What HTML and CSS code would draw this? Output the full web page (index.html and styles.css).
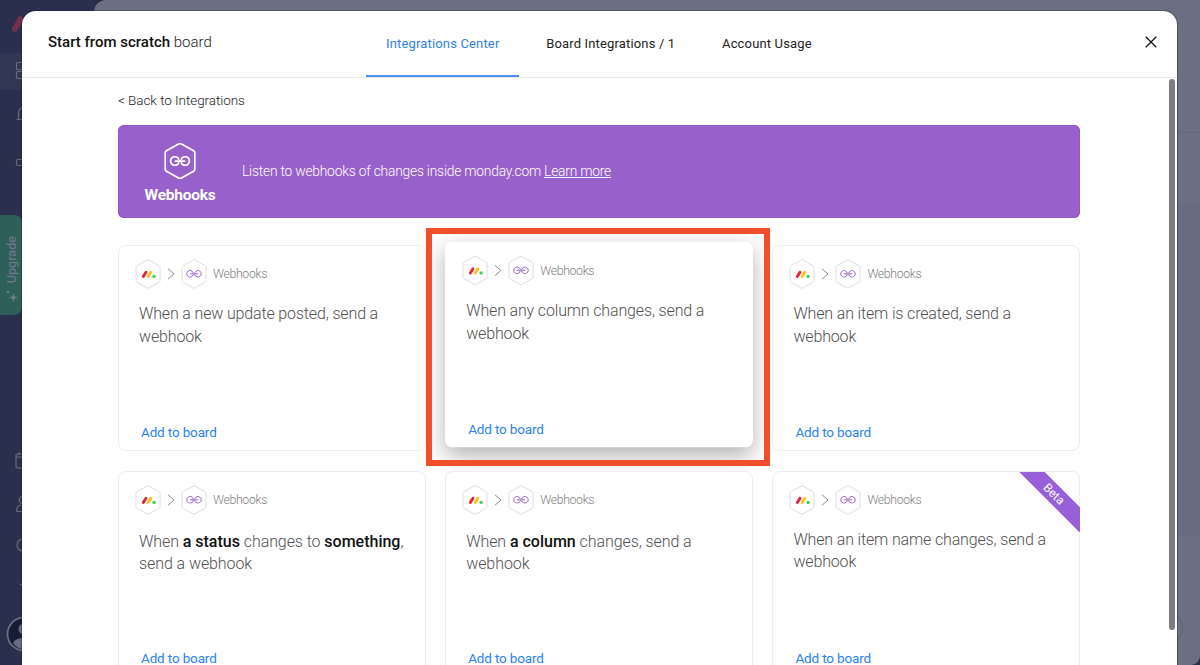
FILE: index.html
```html
<!DOCTYPE html>
<html lang="en">
<head>
<meta charset="utf-8">
<title>Integrations Center</title>
<link rel="stylesheet" href="styles.css">
</head>
<body>
<svg class="defs" aria-hidden="true">
  <symbol id="hex" viewBox="0 0 26 30"><path d="M11.8 1.2Q13 .5 14.2 1.2L24 6.7Q25 7.3 25 8.5V21.5Q25 22.7 24 23.3L14.2 28.8Q13 29.5 11.8 28.8L2 23.3Q1 22.7 1 21.5V8.5Q1 7.3 2 6.7Z"/></symbol>
  <symbol id="link" viewBox="0 0 16 8"><g fill="none" stroke="currentColor"><path d="M7.2 2.9A3.3 3.3 0 1 0 7.2 5.1M8.8 2.9A3.3 3.3 0 1 1 8.8 5.1M4 4H7.4M8.6 4H12"/><path d="M6.8 2.6L9.2 5.4M9.2 2.6L6.8 5.4" stroke-width=".7"/></g></symbol>
  <symbol id="monday" viewBox="0 0 26 30"><path d="M8.3 17.6L11 13.2" stroke="#e8213f"/><path d="M13.2 17.6L15.9 13.2" stroke="#fcc419"/><circle cx="19.1" cy="17.4" r="1.7" fill="#3bd15a"/></symbol>
  <symbol id="chev" viewBox="0 0 8 12"><path d="M1 .8L7 6L1 11.2" fill="none" stroke="#8c8c8c"/></symbol>
</svg>
<div class="app">
  <nav class="rail">
    <div class="active-row"></div>
    <svg class="rail-icons" viewBox="0 0 94 665">
      <path d="M15 29L20.5 19" stroke="#722f4c" stroke-width="6" stroke-linecap="round"/>
      <g fill="none" stroke="#666c82" stroke-width="1.2">
        <rect x="16.5" y="62.5" width="8" height="7" rx="1"/><rect x="16.5" y="71.5" width="8" height="7" rx="1"/>
        <path d="M16.5 119.5H30M18.5 119V113Q18.5 109 22 108"/>
        <rect x="16.5" y="159.5" width="9" height="6" rx="1.5"/>
        <rect x="16" y="454" width="12" height="14" rx="1.5"/><path d="M16 457H30M19 452V455"/>
        <circle cx="23" cy="500" r="3.7"/><path d="M16.5 511.5Q16.5 506 21 505M16.5 511.5H25"/>
        <circle cx="23" cy="545" r="6"/><path d="M20 585L23 583"/>
      </g>
      <circle cx="24" cy="634" r="16.5" fill="#171c36" stroke="#6c7186" stroke-width="1.7"/>
      <circle cx="24" cy="629" r="5.5" fill="#666c82"/><path d="M13 643Q15 638 24 638V649Q17 649 13 643" fill="#666c82"/>
    </svg>
    <div class="upgrade"><svg viewBox="0 0 12 12"><path d="M7.5 3L8.6 6.4L12 7.5L8.6 8.6L7.5 12L6.4 8.6L3 7.5L6.4 6.4ZM2 0L2.7 1.4L4.4 2L2.7 2.6L2 4.3L1.3 2.6L0 2L1.3 1.4Z"/></svg><span>Upgrade</span></div>
  </nav>
  <div class="workspace"><div class="band band-a"></div><div class="band band-b"></div><div class="bubble"></div></div>
</div>

<main class="modal">
  <header class="head">
    <h1 class="title"><b>Start from scratch</b> board</h1>
    <nav class="tabs">
      <a class="tab tab-on">Integrations Center</a>
      <a class="tab">Board Integrations / 1</a>
      <a class="tab">Account Usage</a>
    </nav>
    <svg class="close" viewBox="0 0 12 12"><path d="M.7 .7L11.3 11.3M11.3 .7L.7 11.3" stroke="#111" stroke-width="1.25"/></svg>
  </header>
  <section class="body">
    <a class="back">&lt; Back to Integrations</a>
    <div class="banner">
      <div class="brand">
        <svg class="brand-icon" viewBox="0 0 34 38"><use href="#hex" x="0.5" y="0.5" width="33" height="37"/><use href="#link" x="6.5" y="13.8" width="21" height="10.5"/></svg>
        <strong>Webhooks</strong>
      </div>
      <p class="pitch">Listen to webhooks of changes inside monday.com <u>Learn more</u></p>
    </div>
    <div class="grid">
      <article class="card">
        <div class="flow"><svg class="hexagon"><use href="#hex"/><use href="#monday" class="mark"/></svg><svg class="chev"><use href="#chev"/></svg><svg class="hexagon hook"><use href="#hex"/><use href="#link" x="5" y="10.8" width="16" height="8"/></svg><span>Webhooks</span></div>
        <p class="recipe">When a new update posted, send a webhook</p><a class="add">Add to board</a>
      </article>
      <article class="card card-hover">
        <div class="flow"><svg class="hexagon"><use href="#hex"/><use href="#monday" class="mark"/></svg><svg class="chev"><use href="#chev"/></svg><svg class="hexagon hook"><use href="#hex"/><use href="#link" x="5" y="10.8" width="16" height="8"/></svg><span>Webhooks</span></div>
        <p class="recipe">When any column changes, send a webhook</p><a class="add">Add to board</a>
      </article>
      <article class="card">
        <div class="flow"><svg class="hexagon"><use href="#hex"/><use href="#monday" class="mark"/></svg><svg class="chev"><use href="#chev"/></svg><svg class="hexagon hook"><use href="#hex"/><use href="#link" x="5" y="10.8" width="16" height="8"/></svg><span>Webhooks</span></div>
        <p class="recipe">When an item is created, send a webhook</p><a class="add">Add to board</a>
      </article>
      <article class="card">
        <div class="flow"><svg class="hexagon"><use href="#hex"/><use href="#monday" class="mark"/></svg><svg class="chev"><use href="#chev"/></svg><svg class="hexagon hook"><use href="#hex"/><use href="#link" x="5" y="10.8" width="16" height="8"/></svg><span>Webhooks</span></div>
        <p class="recipe recipe-rich">When <b>a status</b> changes to <b>something</b>,<br>send a webhook</p><a class="add">Add to board</a>
      </article>
      <article class="card">
        <div class="flow"><svg class="hexagon"><use href="#hex"/><use href="#monday" class="mark"/></svg><svg class="chev"><use href="#chev"/></svg><svg class="hexagon hook"><use href="#hex"/><use href="#link" x="5" y="10.8" width="16" height="8"/></svg><span>Webhooks</span></div>
        <p class="recipe recipe-rich">When <b>a column</b> changes, send a<br>webhook</p><a class="add">Add to board</a>
      </article>
      <article class="card">
        <div class="flow"><svg class="hexagon"><use href="#hex"/><use href="#monday" class="mark"/></svg><svg class="chev"><use href="#chev"/></svg><svg class="hexagon hook"><use href="#hex"/><use href="#link" x="5" y="10.8" width="16" height="8"/></svg><span>Webhooks</span></div>
        <p class="recipe">When an item name changes, send a webhook</p><a class="add">Add to board</a>
        <div class="ribbon-clip"><div class="ribbon">Beta</div></div>
      </article>
    </div>
  </section>
  <div class="scrollbar"></div>
</main>
<div class="focus-frame"></div>
</body>
</html>
```
FILE: styles.css
```css
* { box-sizing: border-box; }
body { margin: 0; width: 1200px; height: 665px; overflow: hidden; position: relative; font-family: Roboto, "Liberation Sans", sans-serif; color: #333; background: #292f4c; }
h1, p { margin: 0; font-weight: 300; }
.defs { position: absolute; width: 0; height: 0; }

.app { display: flex; height: 665px; }
.rail { position: relative; width: 94px; background: #292f4c; }
.active-row { position: absolute; top: 53px; width: 52px; height: 37px; background: #2f3752; }
.rail-icons { position: absolute; inset: 0; width: 94px; height: 665px; }
.upgrade { position: absolute; left: 0; top: 215px; width: 22px; height: 100px; border-radius: 0 8px 8px 0; background: #2c6058; display: flex; flex-direction: column-reverse; align-items: center; padding: 0 0 13px 1px; gap: 7px; }
.upgrade svg { width: 12px; height: 12px; fill: #777c90; }
.upgrade span { writing-mode: vertical-rl; transform: rotate(180deg); font-size: 12.6px; line-height: 14px; font-weight: 500; color: #6f7588; }
.workspace { position: relative; flex: 1; background: #6a6f82; border-top-left-radius: 12px; border-bottom-right-radius: 9px; overflow: hidden; }
.band { position: absolute; left: 0; right: 0; }
.band-a { top: 132px; height: 72px; border-top: 1px solid #62677b; }
.band-b { top: 204px; height: 332px; background: #666b80; }
.bubble { position: absolute; right: 17px; top: 613px; width: 30px; height: 30px; border-radius: 50%; border: 1px solid #5b6178; }

.modal { position: absolute; left: 22px; top: 11px; width: 1155px; height: 654px; background: #fff; border-radius: 14px 14px 0 0; box-shadow: 0 0 0 1px rgba(20, 24, 60, .35); overflow: hidden; }
.head { display: flex; height: 67px; border-bottom: 1px solid #e9e9ea; }
.title { width: 344px; padding: 20px 0 0 26px; font-size: 15px; line-height: 22px; white-space: nowrap; color: #222; }
.title b { font-weight: 500; color: #111; }
.tabs { display: flex; flex: 1; }
.tab { height: 66px; padding: 23px 20px 0; margin-right: 6.7px; font-size: 13px; line-height: 20px; letter-spacing: .16px; white-space: nowrap; color: #222; }
.tab-on { color: #2f7ff0; border-bottom: 2px solid #4a90f5; }
.close { width: 12px; height: 12px; margin: 25px 20px 0 0; }
.body { padding: 12px 97px 0 96px; }
.back { display: block; height: 35px; font-size: 13.5px; line-height: 20px; letter-spacing: -.06px; font-weight: 300; color: #222; }
.banner { display: flex; height: 93px; margin-bottom: 27px; border-radius: 6px; background: #9860ca; color: #fff; box-shadow: inset 0 0 0 1px #9257c7; }
.brand { width: 124px; padding-top: 17px; display: flex; flex-direction: column; align-items: center; font-size: 15.5px; line-height: 20px; }
.brand strong { font-weight: 700; letter-spacing: -.25px; }
.brand-icon { width: 34px; height: 38px; margin-bottom: 5px; fill: transparent; stroke: #fff; stroke-width: 1.4; color: #fff; }
.pitch { padding-top: 35px; font-size: 13.8px; line-height: 22px; letter-spacing: -.21px; }
.grid { display: grid; grid-template-columns: repeat(3, 308px); gap: 20px 19.2px; }
.card { position: relative; height: 205.5px; border: 1px solid #ececf3; border-radius: 8px; padding: 13px 17px 0 16px; background: #fff; }
.card-hover { transform: translateY(-3.5px); border-color: transparent; box-shadow: 0 8px 22px rgba(0, 0, 0, .3); }
.flow { display: flex; align-items: center; height: 30px; font-size: 12.3px; letter-spacing: -.35px; color: #808080; font-weight: 300; }
.hexagon { width: 26px; height: 30px; fill: #fff; stroke: #dedede; }
.mark { fill: none; stroke-width: 2.9; stroke-linecap: round; stroke: none; }
.hook { color: #9860ca; }
.chev { width: 8px; height: 12px; margin: 0 6px; }
.flow span { margin-left: 6px; }
.recipe { margin: 14px 0 0 4px; height: 90px; font-size: 16px; line-height: 22.7px; letter-spacing: -.15px; color: #505050; }
.recipe-rich { margin-top: 16px; height: 88px; letter-spacing: -.08px; }
.recipe b { font-weight: 500; letter-spacing: 0; color: #111; }
.add { display: block; margin: 29px 0 0 6px; font-size: 13.5px; line-height: 20px; letter-spacing: -.15px; color: #2a82f2; }
.ribbon-clip { position: absolute; right: -1px; top: 0; width: 62px; height: 62px; overflow: hidden; }
.ribbon { position: absolute; left: -9px; top: 13px; width: 90px; height: 18px; line-height: 18px; text-align: center; font-size: 12px; color: #fff; background: #9860d8; transform: rotate(45deg); }
.scrollbar { position: absolute; right: 2px; top: 68px; width: 6px; height: 551px; border-radius: 3px; background: #7d7d7d; }
.focus-frame { position: absolute; left: 426px; top: 228px; width: 344px; height: 238px; border: 6px solid #ef5029; }
```
